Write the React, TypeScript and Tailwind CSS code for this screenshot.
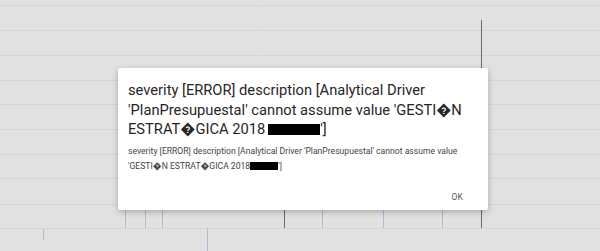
const FFFD = "\uFFFD";

function ChartBackdrop() {
  const rows = [5, 30, 55, 80, 104, 129, 154, 178, 204, 228];
  const blue = [125, 145, 162, 322, 383, 442];
  return (
    <svg className="absolute inset-0" width="600" height="251" viewBox="0 0 600 251">
      {rows.map((y) => (
        <line key={y} x1="0" x2="600" y1={y + 0.5} y2={y + 0.5} stroke="#d5d5d5" strokeWidth="1" />
      ))}
      <line x1="481.5" x2="481.5" y1="20" y2="228" stroke="#6b6b6b" strokeWidth="1" />
      <line x1="284.5" x2="284.5" y1="150" y2="228" stroke="#6b6b6b" strokeWidth="1" />
      {blue.map((x) => (
        <line key={x} x1={x + 0.5} x2={x + 0.5} y1="150" y2="228" stroke="#a9bfd6" strokeWidth="1" />
      ))}
      <line x1="207.5" x2="207.5" y1="228" y2="251" stroke="#a9bfd6" strokeWidth="1" />
      <line x1="43.5" x2="43.5" y1="229" y2="240" stroke="#a9bfd6" strokeWidth="1" />
    </svg>
  );
}

export default function App() {
  return (
    <div className="relative w-[600px] h-[251px] overflow-hidden bg-[#e1e1e1] font-['Roboto','Noto_Sans','DejaVu_Sans',sans-serif]">
      <ChartBackdrop />

      {/* error dialog */}
      <div className="absolute left-[118px] top-[68px] w-[370px] h-[142px] bg-white rounded-[2px] shadow-[0_2px_6px_rgba(0,0,0,0.25)] flex flex-col px-[10px] pt-[13px]">
        <h2 className="text-[14.7px] leading-[19.5px] text-[#262626] font-normal">
          severity [ERROR] description [Analytical Driver 'PlanPresupuestal' cannot assume value 'GESTI{FFFD}N
          ESTRAT{FFFD}GICA 2018<span className="inline-block ml-[3px] w-[52px] h-[11px] bg-black align-[-1px]" />']
        </h2>
        <p className="mt-[4px] text-[8.6px] leading-[15px] text-[#444]">
          severity [ERROR] description [Analytical Driver 'PlanPresupuestal' cannot assume value 'GESTI{FFFD}N
          ESTRAT{FFFD}GICA 2018<span className="inline-block w-[28px] h-[8px] bg-black align-[-1px]" />']
        </p>
        <div className="mt-auto mb-[6px] flex justify-end pr-[15px]">
          <button className="text-[8.5px] text-[#555] tracking-wide">OK</button>
        </div>
      </div>
    </div>
  );
}
